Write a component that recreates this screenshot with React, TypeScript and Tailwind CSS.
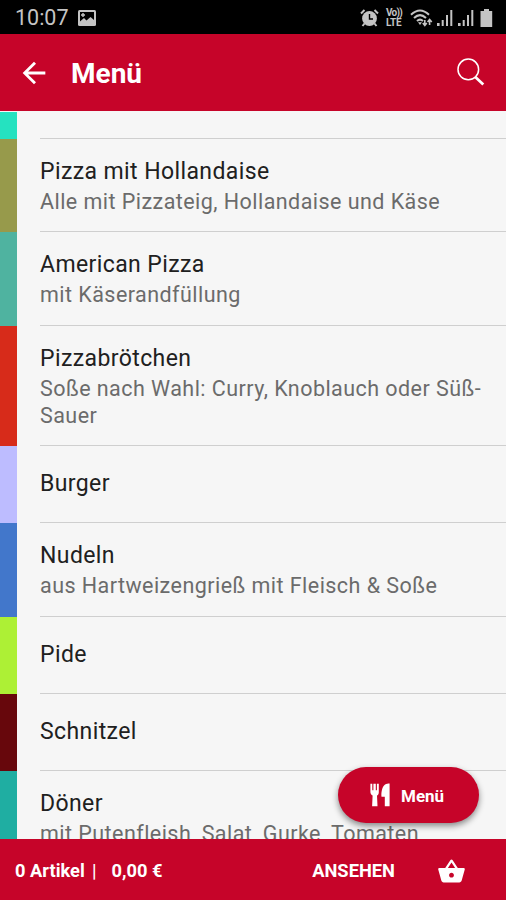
import React from 'react';
import clsx from 'clsx';
import { MdArrowBack, MdShoppingBasket } from 'react-icons/md';

const categories = [
  { name: '', color: 'bg-[#25e2c0]', height: 'h-[27px]' },
  { name: 'Pizza mit Hollandaise', description: 'Alle mit Pizzateig, Hollandaise und Käse', color: 'bg-[#979a4b]', height: 'h-[93px]' },
  { name: 'American Pizza', description: 'mit Käserandfüllung', color: 'bg-[#4fb3a0]', height: 'h-[94px]' },
  { name: 'Pizzabrötchen', description: 'Soße nach Wahl: Curry, Knoblauch oder Süß-Sauer', color: 'bg-[#d72b1a]', height: 'h-[120px]' },
  { name: 'Burger', color: 'bg-[#bdbcff]', height: 'h-[77px]' },
  { name: 'Nudeln', description: 'aus Hartweizengrieß mit Fleisch & Soße', color: 'bg-[#4277cb]', height: 'h-[94px]' },
  { name: 'Pide', color: 'bg-[#adf035]', height: 'h-[77px]' },
  { name: 'Schnitzel', color: 'bg-[#67070c]', height: 'h-[77px]' },
  { name: 'Döner', description: 'mit Putenfleish, Salat, Gurke, Tomaten', color: 'bg-[#1faea2]', height: 'h-[93px]' },
];

function SignalIcon() {
  return (
    <svg width="17" height="18" viewBox="0 0 17 18" fill="#c4c4c4">
      <rect x="0" y="14" width="2.6" height="3" />
      <rect x="4.7" y="11" width="2" height="6" />
      <rect x="9" y="6" width="2" height="11" />
      <rect x="13.3" y="1" width="2" height="16" />
    </svg>
  );
}

function CutleryIcon() {
  return (
    <svg width="21" height="24" viewBox="0 0 21 24" fill="#fff">
      <path d="M.4.8h1.9v6.4h1.1V.8h2.4v6.4h1.1V.8h1.9v8.4c0 1.8-.9 2.9-1.8 3.4l.5 10.6H2.1l.5-10.6C1.3 12 .7 10.9.4 9.2z" />
      <path d="M19.6.5v22.7h-4.8v-9.4h-3.3c-.4-4.2.4-9.8 3.6-12.2C16.400.7 18 .5 19.600.5z" />
    </svg>
  );
}

function StatusBar() {
  return (
    <div className="flex h-[34px] shrink-0 items-center bg-black pt-px text-[#c4c4c4]">
      <span className="ml-[15px] w-[63px] text-[21.5px] leading-none">10:07</span>
      <svg width="18" height="16" viewBox="0 0 18 16">
        <rect width="18" height="16" rx="1.5" fill="#c4c4c4" />
        <path d="M2 2h14v8l-3.5-3-4 3.5L6 8l-4 3.5z" fill="#000" />
        <path d="M5 3v4M3 5h4" stroke="#c4c4c4" strokeWidth="1.4" />
      </svg>
      <div className="ml-auto flex items-center">
        {/* Alarm */}
        <svg width="19" height="18" viewBox="0 0 19 18">
          <circle cx="9.5" cy="9.5" r="7.4" fill="#c4c4c4" />
          <path d="M9.5 5v5h3.5" stroke="#000" strokeWidth="1.4" fill="none" />
          <path d="M1 4.5L4.5 1M18 4.5L14.5 1M4.5 14.5L2.5 17M14.5 14.5l2 2.5" stroke="#c4c4c4" strokeWidth="2" />
        </svg>
        <div className="ml-[7px] flex w-[18px] flex-col gap-px text-[10px] leading-[9px] font-bold">
          <div className="h-[9px] tracking-[-0.7px]">Vo))</div>
          <div className="h-[9px] tracking-[-0.2px]">LTE</div>
        </div>
        {/* Wifi */}
        <svg className="ml-[6px]" width="24" height="18" viewBox="0 0 24 18" fill="none" stroke="#c4c4c4" strokeWidth="2">
          <path d="M1 5.8Q10 -2.8 19 5.8M4 9Q10 3.2 16 9M7 12q3-2.8 6 0" />
          <path d="M8 13.3h4L10 16z" fill="#c4c4c4" stroke="none" />
          <path d="M14.8 11v5M12.8 14l2 2.4 2-2.4M19.6 16v-6M17.6 13l2-2.5 2.2 2.5" strokeWidth="1.6" />
        </svg>
        <div className="ml-[3px]"><SignalIcon /></div>
        <div className="ml-[4px]"><SignalIcon /></div>
        <svg className="mr-[13px] ml-[5px]" width="13" height="18" viewBox="0 0 13 18" fill="#c4c4c4">
          <path d="M4 0h5v2h3.2v16H.5V2H4z" />
        </svg>
      </div>
    </div>
  );
}

export default function App() {
  return (
    <div className="relative flex h-[900px] w-[506px] flex-col overflow-hidden bg-[#f6f6f6] font-[Roboto,sans-serif]">
      <StatusBar />

      {/* Header */}
      <header className="flex h-[77px] shrink-0 items-center bg-[#c60429] text-white">
        <MdArrowBack className="mt-px ml-[17px] size-[34px]" />
        <h1 className="ml-[20px] pt-[2px] text-[28px] leading-none font-bold">Menü</h1>
        <svg className="mr-[20px] mb-[2px] ml-auto" width="30" height="30" viewBox="0 0 30 30" fill="none" stroke="#fff">
          <circle cx="12.3" cy="12.4" r="10.3" strokeWidth="1.5" />
          <path d="M19.3 20l8 7.6" strokeWidth="2.7" />
        </svg>
      </header>

      {/* Categories */}
      <main className="min-h-0 flex-1 overflow-hidden pt-px">
        {categories.map((category, i) => (
          <div key={i} className={clsx('flex', category.height)}>
            <div className={clsx('w-[17px] shrink-0', category.color)} />
            <div
              className={clsx(
                'ml-[23px] flex flex-1 flex-col justify-center border-b-[1.5px] border-[#cfcfcf] pr-5',
                category.description ? 'pt-px' : 'pb-px'
              )}
            >
              {category.name && <h2 className="text-[23px] leading-[29px] tracking-[0.4px] text-[#202020]">{category.name}</h2>}
              {category.description && <p className="mt-[2px] text-[21.5px] leading-[27px] tracking-[0.45px] text-[#6b6b6b]">{category.description}</p>}
            </div>
          </div>
        ))}
      </main>

      <button className="absolute top-[767px] left-[338px] flex h-[56px] w-[141px] items-center rounded-full bg-[#c60429] pl-[32px] text-white shadow-[0_3px_6px_rgba(0,0,0,0.45)]">
        <CutleryIcon />
        <span className="ml-[10px] pt-[3px] text-[17px] leading-none font-bold">Menü</span>
      </button>

      {/* Cart */}
      <footer className="flex h-[61px] shrink-0 items-center bg-[#c60429] pt-[3px] text-[18.3px] font-bold text-white">
        <span className="ml-[15px] w-[69px] whitespace-nowrap">0 Artikel</span>
        <span className="ml-[8px] font-medium">|</span>
        <span className="ml-[15px]">0,00 €</span>
        <span className="ml-auto">ANSEHEN</span>
        <MdShoppingBasket className="mr-[40px] ml-[42px] size-[29px]" />
      </footer>
    </div>
  );
}
